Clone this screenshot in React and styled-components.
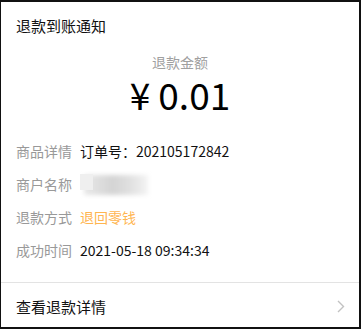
import React from "react";
import styled, { createGlobalStyle } from "styled-components";

const Global = createGlobalStyle`
  html, body { margin: 0; padding: 0; background: #fff; }
  body { font-family: "Noto Sans CJK SC", "Noto Sans", sans-serif; }
  * { box-sizing: border-box; }
`;

const Card = styled.div`
  width: 361px;
  height: 329px;
  border-style: solid;
  border-color: #111;
  border-width: 2px 2px 2px 1px;
  background: #fff;
  display: flex;
  flex-direction: column;
`;

const Title = styled.div`
  padding: 13px 0 0 15px;
  height: 40px;
  font-size: 15px;
  line-height: 22px;
  color: #111;
`;

const AmountBlock = styled.div`
  display: flex;
  flex-direction: column;
  align-items: center;
  padding-top: 10px;
`;

const AmountLabel = styled.div`
  font-size: 14px;
  line-height: 20px;
  color: #a0a0a0;
`;

const Amount = styled.div`
  display: flex;
  align-items: baseline;
  font-size: 37px;
  line-height: 42px;
  margin-top: 1px;
  margin-bottom: 3px;
  color: #000;
`;

const Currency = styled.span`
  margin-right: 8px;
`;

const Rows = styled.div`
  display: flex;
  flex-direction: column;
  padding: 16px 15px 0;
`;

const Row = styled.div`
  display: flex;
  align-items: center;
  height: 33px;
  font-size: 14px;
`;

const Label = styled.span`
  width: 64px;
  color: #999;
  flex: none;
`;

const Value = styled.span`
  color: ${(p) => p.$color || "#111"};
`;

const Blurred = styled.div`
  position: relative;
  width: 68px;
  height: 22px;
`;

const BlurBar = styled.div`
  position: absolute;
  left: 4px;
  top: 2px;
  width: 64px;
  height: 20px;
  background: linear-gradient(90deg, #e8e8e8 0%, #d4d4d4 45%, #e2e2e2 75%, #f4f4f4 100%);
  filter: blur(2px);
`;

const BlurSquare = styled.div`
  position: absolute;
  left: 0;
  top: 1px;
  width: 13px;
  height: 16px;
  background: #efefef;
`;

const Spacer = styled.div`
  flex: 1;
`;

const Footer = styled.div`
  border-top: 1px solid #e3e3e3;
  height: 45px;
  display: flex;
  align-items: center;
  justify-content: space-between;
  padding: 3px 14px 0 15px;
  font-size: 15px;
  color: #111;
`;

const Chevron = () => (
  <svg width="8" height="13" viewBox="0 0 8 13">
    <path d="M1 1 L6.5 6.5 L1 12" fill="none" stroke="#c2c2c2" strokeWidth="1.4" />
  </svg>
);

export default function App() {
  return (
    <>
      <Global />
      <Card>
        <Title>退款到账通知</Title>
        <AmountBlock>
          <AmountLabel>退款金额</AmountLabel>
          <Amount>
            <Currency>¥</Currency>
            <span>0.01</span>
          </Amount>
        </AmountBlock>
        <Rows>
          <Row>
            <Label>商品详情</Label>
            <Value>订单号：202105172842</Value>
          </Row>
          <Row>
            <Label>商户名称</Label>
            <Blurred>
              <BlurBar />
              <BlurSquare />
            </Blurred>
          </Row>
          <Row>
            <Label>退款方式</Label>
            <Value $color="#ffb550">退回零钱</Value>
          </Row>
          <Row>
            <Label>成功时间</Label>
            <Value>2021-05-18 09:34:34</Value>
          </Row>
        </Rows>
        <Spacer />
        <Footer>
          <span>查看退款详情</span>
          <Chevron />
        </Footer>
      </Card>
    </>
  );
}
